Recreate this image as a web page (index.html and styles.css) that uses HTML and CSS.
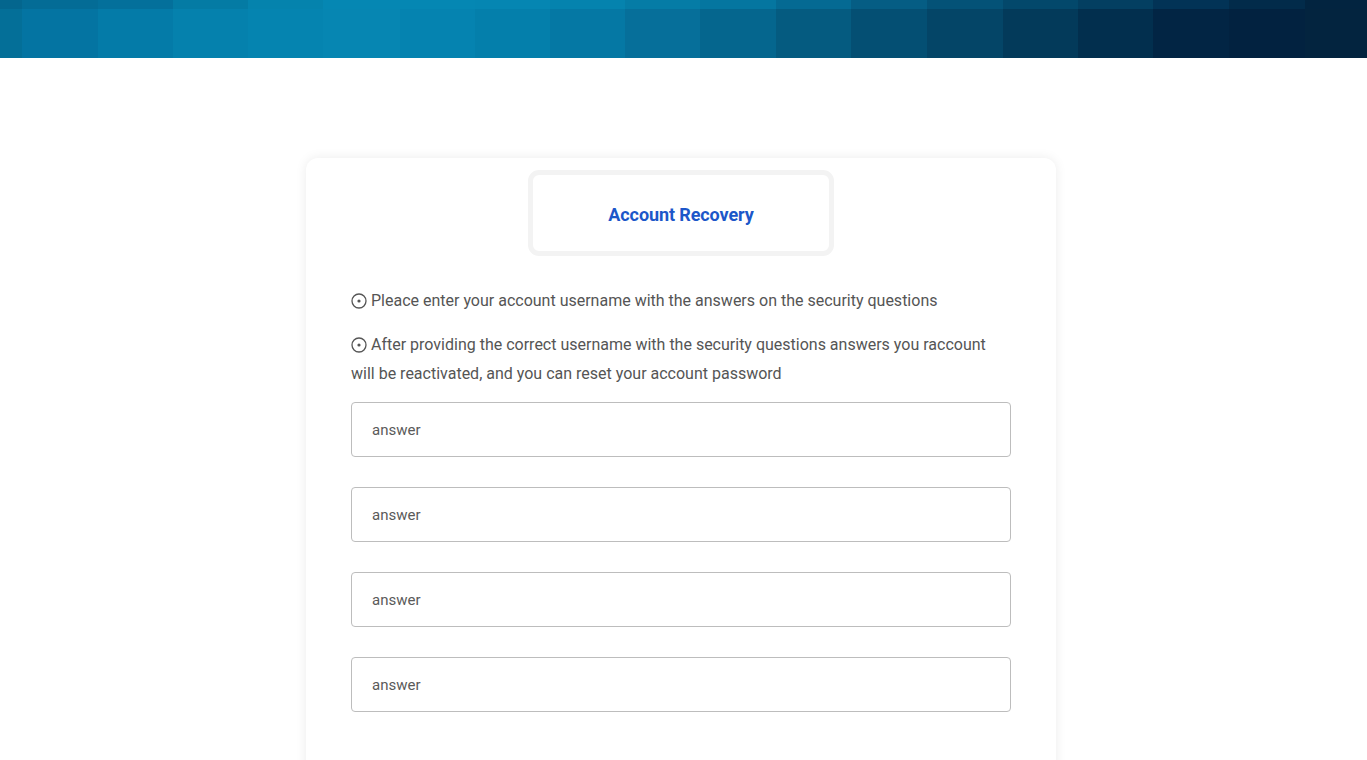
FILE: index.html
```html
<!DOCTYPE html>
<html lang="en">
<head>
<meta charset="utf-8">
<title>Account Recovery</title>
<link rel="stylesheet" href="styles.css">
</head>
<body>
<header class="banner"></header>
<main class="page">
  <section class="card">
    <div class="title-box">
      <div class="title-inner">Account Recovery</div>
    </div>
    <p class="info"><svg class="ico" width="16" height="16" viewBox="0 0 16 16"><circle cx="8" cy="8" r="7" fill="none" stroke="#555" stroke-width="1.3"/><circle cx="8" cy="8" r="1.6" fill="#555"/></svg> Pleace enter your account username with the answers on the security questions</p>
    <p class="info info-last"><svg class="ico" width="16" height="16" viewBox="0 0 16 16"><circle cx="8" cy="8" r="7" fill="none" stroke="#555" stroke-width="1.3"/><circle cx="8" cy="8" r="1.6" fill="#555"/></svg> After providing the correct username with the security questions answers you raccount will be reactivated, and you can reset your account password</p>
    <form class="form">
      <input class="field" type="text" placeholder="answer">
      <input class="field" type="text" placeholder="answer">
      <input class="field" type="text" placeholder="answer">
      <input class="field" type="text" placeholder="answer">
    </form>
  </section>
</main>
</body>
</html>
```
FILE: styles.css
```css
html, body {
  margin: 0;
  padding: 0;
  background: #fff;
  font-family: Roboto, "Liberation Sans", sans-serif;
  overflow: hidden;
}

.banner {
  height: 58px;
  background:
    linear-gradient(to right,
      #04668e 0 22px, #046c96 22px 98px, #04709b 98px 173px, #047ba4 173px 248px,
      #0583ad 248px 323px, #0587b3 323px 475px, #0586b2 475px 550px, #0583ae 550px 625px,
      #057ca6 625px 700px, #0576a0 700px 776px, #056a93 776px 851px, #055d84 851px 927px,
      #045277 927px 1003px, #03486b 1003px 1078px, #033f61 1078px 1153px, #023356 1153px 1229px,
      #022b4a 1229px 1305px, #022440 1305px) top / 100% 9px no-repeat,
    linear-gradient(to right,
      #046f98 0 22px, #0474a2 22px 98px, #047ba8 98px 173px, #0581ad 173px 248px,
      #0584b0 248px 323px, #0686b2 323px 400px, #0583b0 400px 475px, #047fab 475px 550px,
      #0578a4 550px 625px, #066f9a 625px 700px, #05668e 700px 776px, #055b80 776px 851px,
      #044f73 851px 927px, #044567 927px 1003px, #033a5a 1003px 1078px, #022f4e 1078px 1153px,
      #022544 1153px 1229px, #022240 1229px 1305px, #03243f 1305px);
}

.page {
  display: flex;
  justify-content: center;
  padding-top: 100px;
  padding-right: 5px;
}

.card {
  width: 750px;
  min-height: 700px;
  box-sizing: border-box;
  padding: 12px 45px 40px;
  background: #fff;
  border-radius: 12px;
  box-shadow: 0 0 12px rgba(0, 0, 0, 0.08);
}

.title-box {
  width: 306px;
  height: 86px;
  box-sizing: border-box;
  margin: 0 auto 30px;
  border: 5px solid #f3f3f3;
  border-radius: 11px;
  background: #fff;
  display: flex;
}

.title-inner {
  flex: 1;
  display: flex;
  align-items: center;
  justify-content: center;
  font-size: 18px;
  font-weight: 700;
  color: #1c57c9;
  letter-spacing: -0.1px;
  padding-top: 3px;
}

.info {
  margin: 0 0 15px;
  font-size: 16px;
  line-height: 29px;
  color: #555;
}

.info-last {
  margin-bottom: 14px;
}

.ico {
  vertical-align: -3px;
}

.form {
  display: flex;
  flex-direction: column;
  gap: 30px;
  margin: 0;
}

.field {
  height: 55px;
  box-sizing: border-box;
  width: 100%;
  border: 1px solid #bdbdbd;
  border-radius: 4px;
  padding: 0 20px;
  font-family: Roboto, "Liberation Sans", sans-serif;
  font-size: 15px;
  color: #555;
  background: #fff;
  outline: none;
}

.field::placeholder {
  color: #5a5a5a;
}
```
